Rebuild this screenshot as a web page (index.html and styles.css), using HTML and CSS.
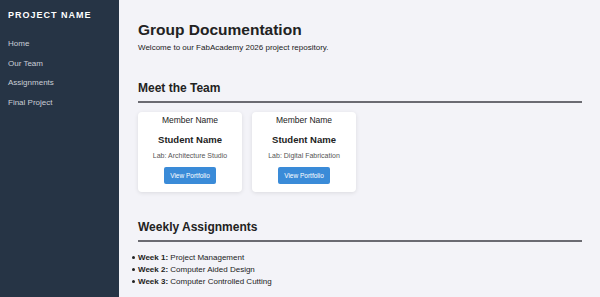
FILE: index.html
```html
<!DOCTYPE html>
<html>

<head>
  <meta name="viewport" content="width=device-width, initial-scale=1">
  <link rel="stylesheet" href="styles.css">
</head>

<body>
  <nav class="sidebar">
    <h2 class="brand">PROJECT NAME</h2>
    <ul class="nav">
      <li><a href="#">Home</a></li>
      <li><a href="#">Our Team</a></li>
      <li><a href="#">Assignments</a></li>
      <li><a href="#">Final Project</a></li>
    </ul>
  </nav>

  <main class="content">
    <header>
      <h1>Group Documentation</h1>
      <p class="intro">Welcome to our FabAcademy 2026 project repository.</p>
    </header>

    <section class="section">
      <h2 class="section-title">Meet the Team</h2>
      <div class="team">
        <div class="card">
          <p class="card-label">Member Name</p>
          <h3 class="card-name">Student Name</h3>
          <p class="card-lab">Lab: Architecture Studio</p>
          <a class="btn" href="#">View Portfolio</a>
        </div>
        <div class="card">
          <p class="card-label">Member Name</p>
          <h3 class="card-name">Student Name</h3>
          <p class="card-lab">Lab: Digital Fabrication</p>
          <a class="btn" href="#">View Portfolio</a>
        </div>
      </div>
    </section>

    <section class="section section--weeks">
      <h2 class="section-title">Weekly Assignments</h2>
      <ul class="weeks">
        <li><b>Week 1:</b> Project Management</li>
        <li><b>Week 2:</b> Computer Aided Design</li>
        <li><b>Week 3:</b> Computer Controlled Cutting</li>
      </ul>
    </section>
  </main>
</body>

</html>
```

FILE: styles.css
```css
:root {
  --sidebar-bg: #263445;
  --page-bg: #f3f3f8;
  --text: #222;
  --accent: #3a8bd8;
}

html,
body {
  height: 100%;
  margin: 0;
}

body {
  display: flex;
  background-color: var(--page-bg);
  color: var(--text);
  font-family: "Liberation Sans", Arial, sans-serif;
  overflow: hidden;
}

.sidebar {
  flex: 0 0 119px;
  background-color: var(--sidebar-bg);
  padding: 10px 8px;
  box-sizing: border-box;
}

.brand {
  margin: 0;
  color: #fff;
  font-size: 9px;
  letter-spacing: 1px;
  line-height: 11px;
}

.nav {
  list-style: none;
  margin: 10px 0 0;
  padding: 0;
}

.nav li {
  height: 19.5px;
  line-height: 19.5px;
}

.nav a {
  color: #c9ced6;
  text-decoration: none;
  font-size: 8px;
}

.content {
  flex: 1;
  padding: 21px 18px 0 19px;
}

h1 {
  margin: 0;
  font-size: 15.5px;
}

.intro {
  margin: 4px 0 0;
  font-size: 8px;
}

.section {
  margin-top: 29px;
}

.section-title {
  margin: 0;
  font-size: 12px;
  padding-bottom: 6px;
  border-bottom: 2px solid #6b6b72;
}

.team {
  display: flex;
  gap: 10px;
  margin-top: 9px;
}

.card {
  width: 104px;
  height: 80px;
  box-sizing: border-box;
  background: #fff;
  border-radius: 4px;
  box-shadow: 0 1px 4px rgba(0, 0, 0, 0.1);
  padding-top: 3px;
  display: flex;
  flex-direction: column;
  align-items: center;
}

.card-label {
  margin: 0;
  font-size: 8.5px;
  line-height: 10px;
}

.card-name {
  margin: 9px 0 0;
  font-size: 9.5px;
  line-height: 11px;
}

.card-lab {
  margin: 6px 0 0;
  font-size: 7px;
  color: #555;
  line-height: 9px;
}

.btn {
  margin-top: 7px;
  width: 52px;
  height: 17px;
  line-height: 17px;
  background: var(--accent);
  color: #fff;
  text-align: center;
  font-size: 6.5px;
  border-radius: 2px;
  text-decoration: none;
}

.section--weeks {
  margin-top: 28px;
}

.weeks {
  list-style: none;
  margin: 10px 0 0;
  padding: 0;
  font-size: 8px;
  line-height: 12px;
}

.weeks li::before {
  content: "";
  display: inline-block;
  width: 3px;
  height: 3px;
  margin: 0 3px 0 -6px;
  border-radius: 50%;
  background: var(--text);
  vertical-align: middle;
}
```
